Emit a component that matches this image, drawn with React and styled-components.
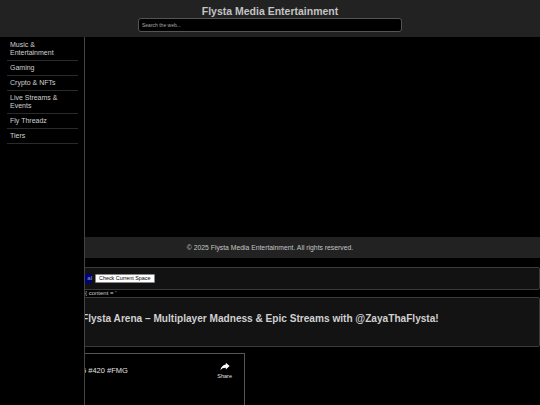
import React from "react";
import styled, { createGlobalStyle } from "styled-components";

const GlobalStyle = createGlobalStyle`
  html, body {
    margin: 0;
    padding: 0;
    background: #000;
    font-family: "Liberation Sans", Arial, sans-serif;
    color: #ccc;
    overflow: hidden;
  }
`;

const links = [
  "Music & Entertainment",
  "Gaming",
  "Crypto & NFTs",
  "Live Streams & Events",
  "Fly Threadz",
  "Tiers",
];

const App = () => {
  return (
    <>
      <GlobalStyle />
      <Header>
        <Title>Flysta Media Entertainment</Title>
        <Search type="text" placeholder="Search the web..." />
      </Header>

      <Sidebar>
        <NavList>
          {links.map((l) => (
            <NavItem key={l}>{l}</NavItem>
          ))}
        </NavList>
      </Sidebar>

      <Main>
        <Stage />
        <Footer>© 2025 Flysta Media Entertainment. All rights reserved.</Footer>

        <SpaceBox>
          <SpaceSelect>al</SpaceSelect>
          <CheckBtn>Check Current Space</CheckBtn>
        </SpaceBox>
        <CodeLine>{"{ content = '"}</CodeLine>

        <TitleBox>
          <ArenaTitle>
            Flysta Arena – Multiplayer Madness &amp; Epic Streams with @ZayaThaFlysta!
          </ArenaTitle>
        </TitleBox>

        <Video>
          <VideoTop>
            <VideoTitle>5 #420 #FMG</VideoTitle>
            <ShareBtn>
              <svg width="10" height="9" viewBox="0 0 24 20" fill="#fff">
                <path d="M14 5V1l9 8-9 8v-4.2C7.5 12.8 3.5 14.5 1 19c1-6 4.5-12.5 13-14z" />
              </svg>
              <span>Share</span>
            </ShareBtn>
          </VideoTop>
        </Video>
      </Main>
    </>
  );
};

export default App;

const Header = styled.header`
  height: 37px;
  box-sizing: border-box;
  background: #222;
  display: flex;
  flex-direction: column;
  align-items: center;
  padding-top: 5px;
  gap: 1px;
`;

const Title = styled.h1`
  margin: 0;
  font-size: 10.5px;
  line-height: 12px;
  font-weight: bold;
  color: #c4c4c4;
`;

const Search = styled.input`
  width: 264px;
  height: 14px;
  box-sizing: border-box;
  background: #000;
  border: 1px solid #555;
  border-radius: 3px;
  padding: 0 3px;
  font-family: "Liberation Sans", Arial, sans-serif;
  font-size: 5px;
  color: #ccc;
  outline: none;
  &::placeholder {
    color: #aaa;
  }
`;

const Sidebar = styled.nav`
  position: fixed;
  top: 37px;
  left: 0;
  bottom: 0;
  width: 84px;
  background: #000;
  border-right: 1px solid #444;
  z-index: 5;
`;

const NavList = styled.ul`
  list-style: none;
  margin: 1px 6px 0 7px;
  padding: 0;
`;

const NavItem = styled.li`
  padding: 3px 3px;
  font-size: 7px;
  line-height: 8px;
  color: #d0d0d0;
  border-bottom: 1px solid #2a2a2a;
`;

const Main = styled.main`
  display: flex;
  flex-direction: column;
  align-items: flex-start;
`;

const Stage = styled.div`
  width: 100%;
  height: 200px;
  background: #000;
`;

const Footer = styled.footer`
  width: 100%;
  height: 21px;
  background: #222;
  display: flex;
  align-items: center;
  justify-content: center;
  font-size: 6.8px;
  color: #c4c4c4;
`;

const SpaceBox = styled.div`
  margin-top: 9px;
  width: 540px;
  height: 23px;
  box-sizing: border-box;
  background: #121212;
  border: 1px solid #3a3a3a;
  border-radius: 2px;
  display: flex;
  align-items: center;
  gap: 3px;
  padding-left: 63px;
`;

const SpaceSelect = styled.div`
  width: 28px;
  height: 9px;
  background: #000080;
  color: #9aa;
  font-size: 6px;
  line-height: 9px;
  text-align: right;
`;

const CheckBtn = styled.button`
  height: 9px;
  padding: 0 3px;
  background: #fff;
  border: 1px solid #888;
  border-radius: 1px;
  font-family: "Liberation Sans", Arial, sans-serif;
  font-size: 5.4px;
  line-height: 7px;
  color: #000;
`;

const CodeLine = styled.div`
  margin-left: 85px;
  font-size: 6px;
  line-height: 7px;
  color: #ccc;
`;

const TitleBox = styled.section`
  width: 540px;
  height: 50px;
  box-sizing: border-box;
  background: #131313;
  border: 1px solid #3a3a3a;
  border-radius: 2px;
  padding: 14px 0 0 81px;
`;

const ArenaTitle = styled.h2`
  margin: 0;
  font-size: 10.1px;
  line-height: 13px;
  font-weight: bold;
  color: #d0d0d0;
  white-space: nowrap;
`;

const Video = styled.div`
  margin-top: 6px;
  width: 245px;
  height: 80px;
  box-sizing: border-box;
  background: #000;
  border: 1px solid #555;
`;

const VideoTop = styled.div`
  display: flex;
  justify-content: space-between;
  align-items: flex-start;
  padding: 8px 12px 0 81px;
`;

const VideoTitle = styled.div`
  font-size: 7.5px;
  line-height: 11px;
  margin-top: 3px;
  color: #e0e0e0;
`;

const ShareBtn = styled.div`
  display: flex;
  flex-direction: column;
  align-items: center;
  gap: 2px;
  span {
    font-size: 5.5px;
    color: #e0e0e0;
  }
`;
